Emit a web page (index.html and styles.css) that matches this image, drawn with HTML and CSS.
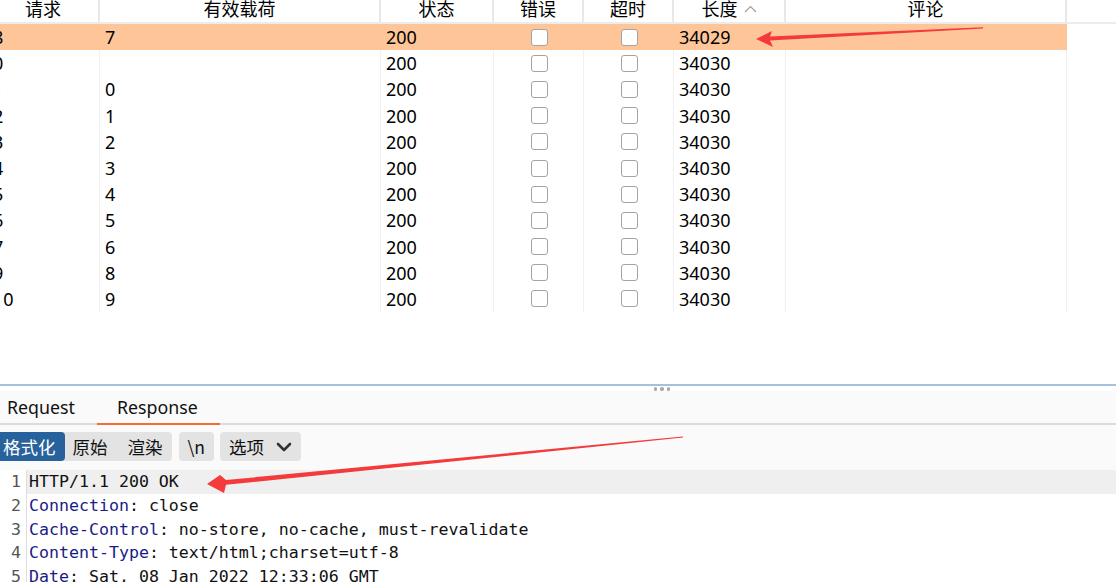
FILE: index.html
```html
<!DOCTYPE html>
<html lang="zh">
<head>
<meta charset="utf-8">
<link rel="stylesheet" href="styles.css">
</head>
<body>
<div class="page">
  <section class="results">
    <div class="grid head">
      <div class="hc">请求</div>
      <div class="hc">有效载荷</div>
      <div class="hc">状态</div>
      <div class="hc">错误</div>
      <div class="hc">超时</div>
      <div class="hc">长度 <svg class="caret" width="13" height="8" viewBox="0 0 13 8"><polyline points="1,7 6.5,1.5 12,7" fill="none" stroke="#a0a0a0" stroke-width="1.2"/></svg></div>
      <div class="hc">评论</div>
      <div class="hc fill"></div>
    </div>
    <div class="rows">
      <div class="grid row sel"><div class="c n">8</div><div class="c">7</div><div class="c">200</div><div class="c cb"><span class="box"></span></div><div class="c cb"><span class="box"></span></div><div class="c">34029</div><div class="c"></div><div class="c fill"></div></div>
      <div class="grid row"><div class="c n">0</div><div class="c"></div><div class="c">200</div><div class="c cb"><span class="box"></span></div><div class="c cb"><span class="box"></span></div><div class="c">34030</div><div class="c"></div><div class="c fill"></div></div>
      <div class="grid row"><div class="c n">1</div><div class="c">0</div><div class="c">200</div><div class="c cb"><span class="box"></span></div><div class="c cb"><span class="box"></span></div><div class="c">34030</div><div class="c"></div><div class="c fill"></div></div>
      <div class="grid row"><div class="c n">2</div><div class="c">1</div><div class="c">200</div><div class="c cb"><span class="box"></span></div><div class="c cb"><span class="box"></span></div><div class="c">34030</div><div class="c"></div><div class="c fill"></div></div>
      <div class="grid row"><div class="c n">3</div><div class="c">2</div><div class="c">200</div><div class="c cb"><span class="box"></span></div><div class="c cb"><span class="box"></span></div><div class="c">34030</div><div class="c"></div><div class="c fill"></div></div>
      <div class="grid row"><div class="c n">4</div><div class="c">3</div><div class="c">200</div><div class="c cb"><span class="box"></span></div><div class="c cb"><span class="box"></span></div><div class="c">34030</div><div class="c"></div><div class="c fill"></div></div>
      <div class="grid row"><div class="c n">5</div><div class="c">4</div><div class="c">200</div><div class="c cb"><span class="box"></span></div><div class="c cb"><span class="box"></span></div><div class="c">34030</div><div class="c"></div><div class="c fill"></div></div>
      <div class="grid row"><div class="c n">6</div><div class="c">5</div><div class="c">200</div><div class="c cb"><span class="box"></span></div><div class="c cb"><span class="box"></span></div><div class="c">34030</div><div class="c"></div><div class="c fill"></div></div>
      <div class="grid row"><div class="c n">7</div><div class="c">6</div><div class="c">200</div><div class="c cb"><span class="box"></span></div><div class="c cb"><span class="box"></span></div><div class="c">34030</div><div class="c"></div><div class="c fill"></div></div>
      <div class="grid row"><div class="c n">9</div><div class="c">8</div><div class="c">200</div><div class="c cb"><span class="box"></span></div><div class="c cb"><span class="box"></span></div><div class="c">34030</div><div class="c"></div><div class="c fill"></div></div>
      <div class="grid row"><div class="c n">10</div><div class="c">9</div><div class="c">200</div><div class="c cb"><span class="box"></span></div><div class="c cb"><span class="box"></span></div><div class="c">34030</div><div class="c"></div><div class="c fill"></div></div>
    </div>
  </section>

  <div class="splitter">
    <div class="dots"><span></span><span></span><span></span></div>
  </div>

  <nav class="tabs">
    <div class="tab first">Request</div>
    <div class="tab active">Response</div>
  </nav>

  <div class="toolbar">
    <div class="seg">
      <span class="btn on">格式化</span>
      <span class="btn raw">原始</span>
      <span class="btn render">渲染</span>
    </div>
    <span class="btn single nl">\n</span>
    <span class="btn single opts">选项 <svg width="16" height="10" viewBox="0 0 16 10"><polyline points="2,2 8,8 14,2" fill="none" stroke="#333" stroke-width="2.6" stroke-linejoin="round" stroke-linecap="round"/></svg></span>
  </div>

  <div class="code">
    <div class="ln cur"><span class="no">1</span><span class="tx">HTTP/1.1 200 OK</span></div>
    <div class="ln"><span class="no">2</span><span class="tx"><span class="k">Connection</span>: close</span></div>
    <div class="ln"><span class="no">3</span><span class="tx"><span class="k">Cache-Control</span>: no-store, no-cache, must-revalidate</span></div>
    <div class="ln"><span class="no">4</span><span class="tx"><span class="k">Content-Type</span>: text/html;charset=utf-8</span></div>
    <div class="ln"><span class="no">5</span><span class="tx"><span class="k">Date</span>: Sat, 08 Jan 2022 12:33:06 GMT</span></div>
  </div>

  <svg class="marks" width="1116" height="582" viewBox="0 0 1116 582">
    <polygon fill="#f43a3a" points="983,27.3 983,28.6 770,40.6 773,47 756,39 772,31 770,36.4"/>
    <polygon fill="#f43a3a" points="683,436.4 683,437.6 226,484.8 224,493 207,484 220,475 226,480"/>
  </svg>
</div>
</body>
</html>
```

FILE: styles.css
```css
* { box-sizing: border-box; }
html, body { margin: 0; padding: 0; background: #fff; }
body { overflow: hidden; width: 1116px; height: 582px; }
.page {
  position: relative;
  width: 1116px;
  height: 582px;
  overflow: hidden;
  font-family: "Noto Sans", "Noto Sans CJK SC", sans-serif;
  color: #000;
}

.results { height: 384px; }
.grid {
  display: grid;
  grid-template-columns: 112px 281px 113px 90px 90px 112px 281px 1fr;
  margin-left: -12px;
  width: 1128px;
}
.head {
  height: 24px;
  border-bottom: 2px solid #ececec;
  font-size: 18px;
}
.hc {
  display: flex;
  align-items: flex-start;
  justify-content: center;
  line-height: 18px;
  height: 22px;
  border-right: 2px solid #e8e8e8;
}
.hc.fill { border-right: 0; }
.caret { margin-left: 6px; margin-top: 5px; }

.row {
  height: 26.2px;
  font-size: 18px;
}
.c {
  height: 26.2px;
  line-height: 26px;
  padding-left: 5px;
  border-right: 1px solid #f1f1f1;
  white-space: nowrap;
}
.c.fill { border-right: 0; }
.row.sel .c { background: #fec598; border-right-color: #fec598; }
.row.sel .c.fill { background: #fff; }
.cb { display: flex; align-items: center; justify-content: center; padding-left: 0; }
.box {
  width: 17px;
  height: 17px;
  margin-left: 1px;
  border: 1.4px solid #a3a3a3;
  border-radius: 3px;
  background: #fff;
}

.splitter {
  height: 7px;
  border-top: 2px solid #a9c0dd;
  display: flex;
  justify-content: center;
}
.dots { display: flex; gap: 3px; margin-left: 208px; margin-top: 1px; }
.dots span { width: 3.5px; height: 3.5px; border-radius: 50%; background: #a9a9a9; }

.tabs {
  display: flex;
  height: 34px;
  background: #fafafa;
  border-bottom: 2px solid #dcdcdc;
  font-size: 17.8px;
}
.tab {
  padding: 0 22px 0 20px;
  height: 32px;
  line-height: 32px;
  color: #111;
}
.tab.first { margin-left: -13px; }
.tab.active { box-shadow: 0 2px 0 #f46d35; }

.toolbar {
  height: 45px;
  background: #fafafa;
  display: flex;
  align-items: flex-start;
  padding-top: 7px;
  gap: 7px;
  font-family: "Noto Sans CJK SC", "Noto Sans", sans-serif;
  font-size: 17.5px;
}
.seg {
  display: flex;
  margin-left: -5px;
  background: #e3e3e3;
  border-radius: 4px;
  height: 29px;
}
.btn {
  display: flex;
  align-items: center;
  height: 29px;
  padding: 0 8px;
  color: #111;
  border-radius: 4px;
}
.btn.on { background: #28629c; color: #fff; padding: 0 9px 0 8px; }
.btn.raw { padding: 0 10px 0 8px; }
.btn.render { padding: 0 9px 0 10px; }
.btn.single { background: #e3e3e3; }
.btn.nl { padding: 0 9px 0 9px; }
.toolbar .nl + .opts { margin-left: -1px; }
.opts { gap: 12px; padding: 0 9px 0 9px; }

.code {
  font-family: "DejaVu Sans Mono", "Liberation Mono", monospace;
  font-size: 16.6px;
}
.ln {
  display: flex;
  height: 23.75px;
  line-height: 23.75px;
  white-space: pre;
}
.ln.cur .tx { background: #efefef; }
.no {
  width: 27px;
  flex: none;
  text-align: right;
  padding-right: 5px;
  color: #555;
  border-right: 1px solid #dedede;
}
.tx { flex: 1; padding-left: 2px; color: #111; }
.k { color: #1b1b86; }

.marks { position: absolute; left: 0; top: 0; pointer-events: none; }
```
